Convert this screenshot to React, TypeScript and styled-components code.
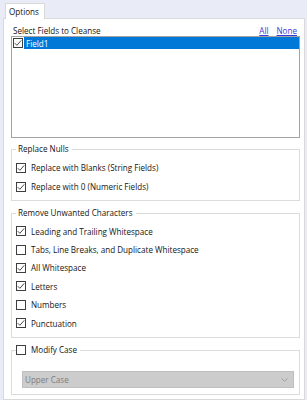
import React from "react";
import styled, { createGlobalStyle } from "styled-components";

const Global = createGlobalStyle`
  html, body { margin: 0; padding: 0; }
  body {
    background: #e9ecf6;
    font-family: "Open Sans", "Noto Sans", sans-serif;
    font-size: 8.1px;
    color: #141414;
    width: 307px;
    height: 400px;
    overflow: hidden;
  }
`;

const Page = styled.div`
  width: 307px;
  height: 400px;
  display: flex;
  flex-direction: column;
  background: #e9ecf6;
`;

const TabStrip = styled.div`
  height: 18px;
  display: flex;
  align-items: flex-end;
  padding-left: 5px;
  position: relative;
  z-index: 1;
`;

const Tab = styled.div`
  height: 16px;
  width: 40px;
  margin-bottom: -1px;
  box-sizing: border-box;
  padding: 0 0 0 3px;
  display: flex;
  align-items: center;
  background: #ffffff;
  border: 1px solid #d9d9d9;
  border-bottom: none;
`;

const Panel = styled.div`
  margin-left: 3px;
  width: 302px;
  flex: 1;
  box-sizing: border-box;
  background: #ffffff;
  border: 1px solid #d9d9d9;
  padding: 6px 4px 0 7px;
  display: flex;
  flex-direction: column;
`;

const LabelRow = styled.div`
  height: 11px;
  display: flex;
  align-items: center;
  justify-content: space-between;
  padding: 0 3px 0 2px;
  line-height: 11px;
`;

const Links = styled.div`
  display: flex;
  gap: 8px;
`;

const LinkText = styled.a`
  color: #3a3ad6;
  text-decoration: underline;
  cursor: pointer;
`;

const ListBox = styled.div`
  height: 102px;
  width: 289px;
  box-sizing: border-box;
  border: 1px solid #a3a3a3;
  background: #ffffff;
`;

const ListRow = styled.div`
  height: 12px;
  display: flex;
  align-items: center;
  padding-left: 1px;
`;

const Highlight = styled.div`
  flex: 1;
  height: 12px;
  margin-left: 1px;
  background: #0078d7;
  color: #ffffff;
  display: flex;
  align-items: center;
  padding-left: 2px;
`;

const Group = styled.fieldset<{ $top: number; $pt: number; $pb: number }>`
  margin: ${(p) => p.$top}px 0 0 0;
  width: 289px;
  box-sizing: border-box;
  border: 1px solid #dcdcdc;
  padding: ${(p) => p.$pt}px 5px ${(p) => p.$pb}px 4px;
  min-width: 0;
`;

const Legend = styled.legend<{ $pl: number }>`
  padding: 0 3px 0 ${(p) => p.$pl}px;
  height: 12px;
  line-height: 12px;
  display: flex;
  align-items: center;
  gap: 5px;
`;

const Row = styled.div<{ $h: number }>`
  height: ${(p) => p.$h}px;
  display: flex;
  align-items: center;
  gap: 5px;
`;

const Select = styled.div`
  margin-left: 6px;
  height: 17px;
  box-sizing: border-box;
  background: #cccccc;
  border: 1px solid #bfbfbf;
  color: #7d7d7d;
  display: flex;
  align-items: center;
  justify-content: space-between;
  padding: 0 5px 0 2px;
`;

const Box = styled.svg`
  flex: none;
  display: block;
`;

function Check({ checked }: { checked: boolean }) {
  return (
    <Box width="10" height="10" viewBox="0 0 10 10">
      <rect x="0.5" y="0.5" width="9" height="9" fill="#fff" stroke="#3f3f3f" strokeWidth="1" />
      {checked && (
        <path d="M1.8 5.2 L3.9 7.3 L8.2 2.4" fill="none" stroke="#4a4a4a" strokeWidth="1" />
      )}
    </Box>
  );
}

const Chevron = () => (
  <svg width="7" height="4" viewBox="0 0 7 4">
    <path d="M0.5 0.5 L3.5 3.2 L6.5 0.5" fill="none" stroke="#9a9a9a" strokeWidth="0.9" />
  </svg>
);

export default function App() {
  const removeItems: [string, boolean][] = [
    ["Leading and Trailing Whitespace", true],
    ["Tabs, Line Breaks, and Duplicate Whitespace", false],
    ["All Whitespace", true],
    ["Letters", true],
    ["Numbers", false],
    ["Punctuation", true],
  ];
  return (
    <Page>
      <Global />
      <TabStrip>
        <Tab>Options</Tab>
      </TabStrip>
      <Panel>
        <LabelRow>
          <span>Select Fields to Cleanse</span>
          <Links>
            <LinkText>All</LinkText>
            <LinkText>None</LinkText>
          </Links>
        </LabelRow>
        <ListBox>
          <ListRow>
            <Check checked />
            <Highlight>Field1</Highlight>
          </ListRow>
        </ListBox>
        <Group $top={5} $pt={3} $pb={4}>
          <Legend $pl={2}>Replace Nulls</Legend>
          <Row $h={19}>
            <Check checked />
            <span>Replace with Blanks (String Fields)</span>
          </Row>
          <Row $h={19}>
            <Check checked />
            <span>Replace with 0 (Numeric Fields)</span>
          </Row>
        </Group>
        <Group $top={6} $pt={3} $pb={5}>
          <Legend $pl={2}>Remove Unwanted Characters</Legend>
          {removeItems.map(([label, c]) => (
            <Row $h={18.4} key={label}>
              <Check checked={c} />
              <span>{label}</span>
            </Row>
          ))}
        </Group>
        <Group $top={6} $pt={15} $pb={6}>
          <Legend $pl={0}>
            <Check checked={false} />
            <span>Modify Case</span>
          </Legend>
          <Select>
            <span>Upper Case</span>
            <Chevron />
          </Select>
        </Group>
      </Panel>
    </Page>
  );
}
